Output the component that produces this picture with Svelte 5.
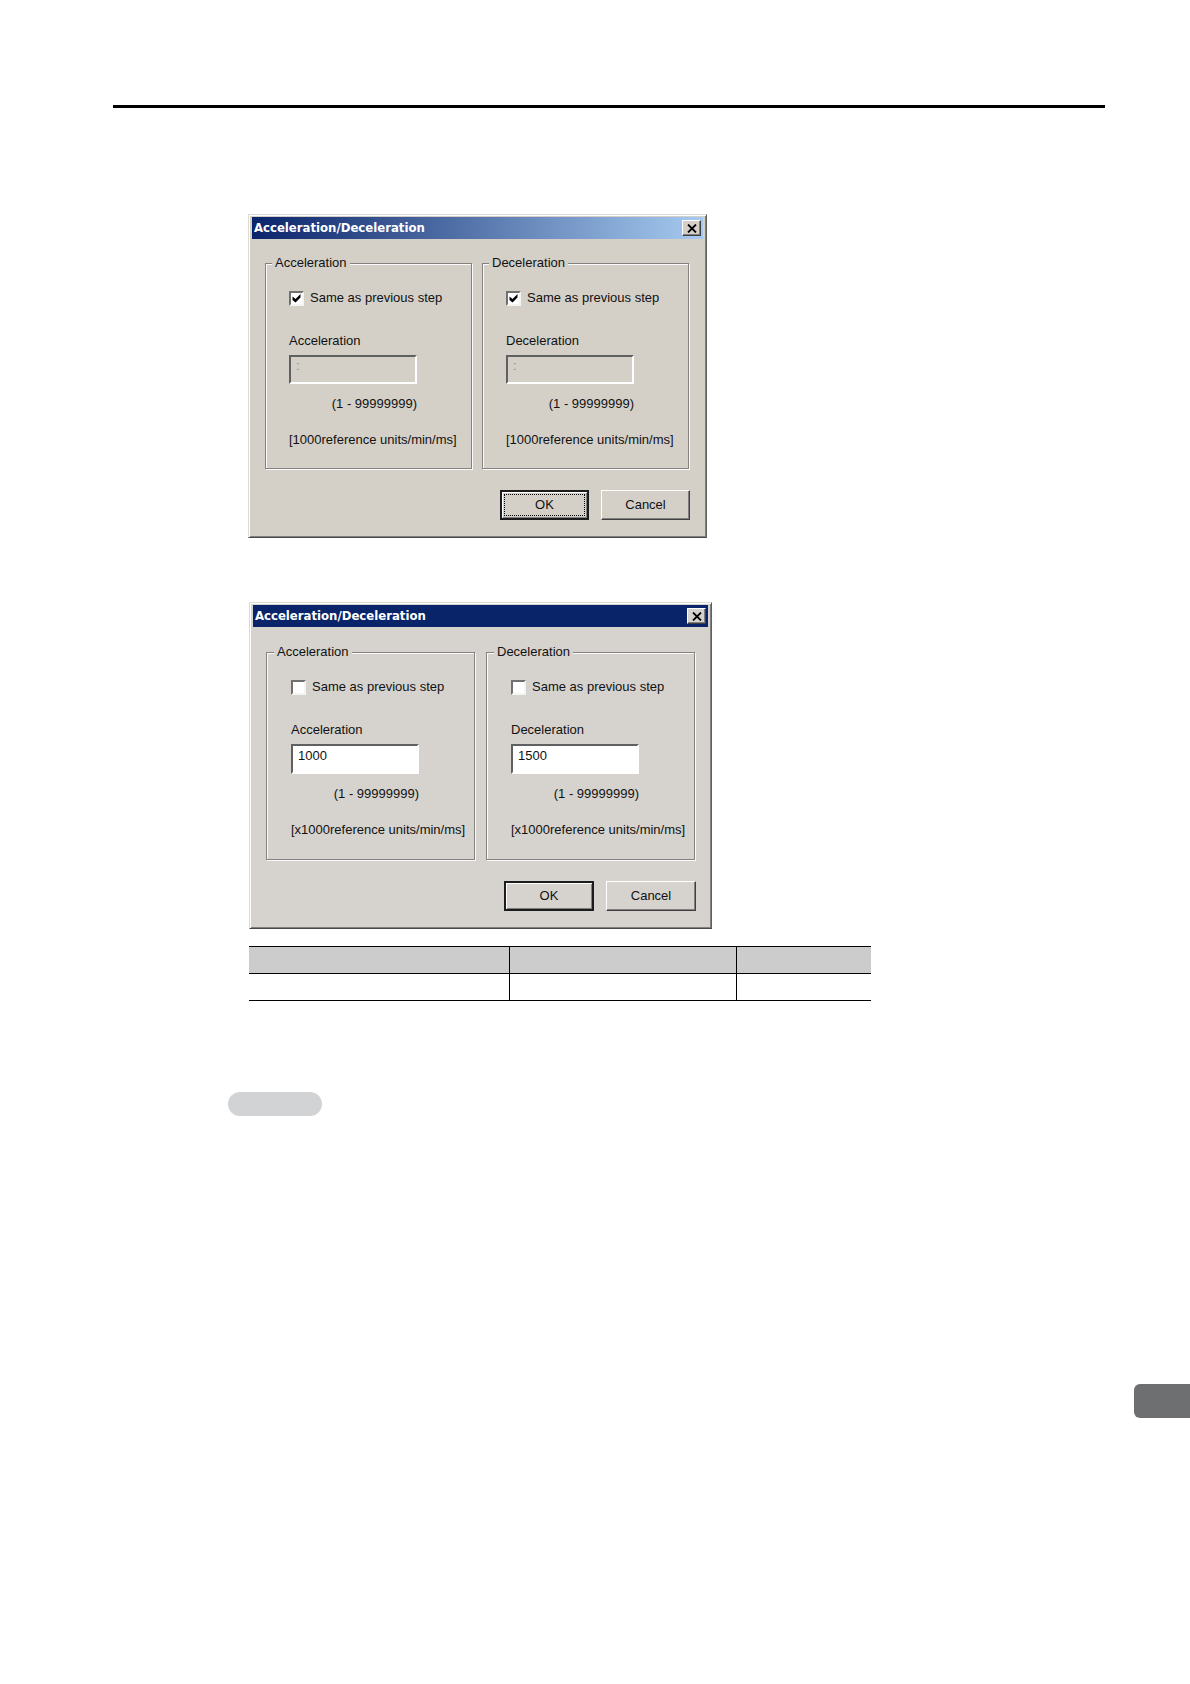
<script>
  let dialogs = $state([
    {
      id: 'same',
      active: 'gradient',
      unit: '[1000reference units/min/ms]',
      groups: [
        { name: 'Acceleration', same: true, value: ':' },
        { name: 'Deceleration', same: true, value: ':' }
      ]
    },
    {
      id: 'custom',
      active: 'solid',
      unit: '[x1000reference units/min/ms]',
      groups: [
        { name: 'Acceleration', same: false, value: '1000' },
        { name: 'Deceleration', same: false, value: '1500' }
      ]
    }
  ]);
</script>

<main>
  <hr />

  {#each dialogs as dialog (dialog.id)}
    <section class="dialog {dialog.active}" aria-labelledby="{dialog.id}-title">
      <header>
        <h2 id="{dialog.id}-title">Acceleration/Deceleration</h2>
        <button class="close" type="button" aria-label="Close">
          <svg viewBox="0 0 10 9" width="10" height="9" aria-hidden="true">
            <path d="M1 0.5 L9 8.5 M9 0.5 L1 8.5" stroke="#000" stroke-width="1.8" fill="none" />
          </svg>
        </button>
      </header>
      <form onsubmit={(e) => e.preventDefault()}>
        <div class="groups">
          {#each dialog.groups as group (group.name)}
            <fieldset>
              <legend>{group.name}</legend>
              <label class="check">
                <input type="checkbox" bind:checked={group.same} />
                <svg viewBox="0 0 15 15" width="15" height="15" aria-hidden="true">
                  <path d="M3.5 5.5 L6.5 8 L11.5 3 V6.5 L6.5 11.5 L3.5 9 Z" fill="#000" />
                </svg>
                <span>Same as previous step</span>
              </label>
              <label class="name" for="{dialog.id}-{group.name}">{group.name}</label>
              <div class="entry">
                <input
                  class="value"
                  id="{dialog.id}-{group.name}"
                  type="text"
                  bind:value={group.value}
                  disabled={group.same}
                />
                <p class="range">(1 - 99999999)</p>
              </div>
              <p class="unit">{dialog.unit}</p>
            </fieldset>
          {/each}
        </div>
        <div class="actions">
          <button class="push default" type="submit"><span>OK</span></button>
          <button class="push" type="button"><span>Cancel</span></button>
        </div>
      </form>
    </section>
  {/each}

  <table>
    <colgroup><col class="wide" /><col class="mid" /><col /></colgroup>
    <thead><tr><th></th><th></th><th></th></tr></thead>
    <tbody><tr><td></td><td></td><td></td></tr></tbody>
  </table>

  <div class="pill"></div>
  <div class="tab"></div>
</main>

<style>
  :global(body) {
    margin: 0;
    background: #fff;
  }
  main {
    box-sizing: border-box;
    display: flex;
    flex-direction: column;
    align-items: flex-start;
    min-height: 100vh;
    padding-top: 105px;
    font: 13px/16px 'Liberation Sans', Arial, sans-serif;
    color: #111;
  }
  hr {
    align-self: stretch;
    height: 3px;
    margin: 0 85px 106px 113px;
    border: 0;
    background: #000;
  }
  .dialog {
    --face: #d4d0c8;
    --top: 16px;
    --field: 29px;
    --foot: 20px;
    --gap: 9px;
    --inset: 23px;
    --right: 14px;
    --button: 89px;
    box-sizing: border-box;
    width: 459px;
    max-width: 100%;
    margin: 0 0 64px 248px;
    border: 1px solid;
    border-color: #dcdad4 #606060 #484848 #dcdad4;
    box-shadow: inset 1px 1px #fff, inset -1px -1px #808080;
    padding: 2px;
    background: var(--face);
  }
  .solid {
    --face: #d6d3ce;
    --top: 17px;
    --field: 30px;
    --foot: 21px;
    --gap: 10px;
    --inset: 24px;
    --right: 13px;
    --button: 90px;
    width: 463px;
    margin: 0 0 17px 249px;
  }
  header {
    display: flex;
    align-items: center;
    justify-content: space-between;
    height: 22px;
    margin: 0 1px;
    padding: 0 2px;
    background: #0a246a;
  }
  .gradient header {
    background: linear-gradient(90deg, #0a246a, #a6caf0);
  }
  h2 {
    margin: 0;
    font: bold 13px/20px 'DejaVu Sans Condensed', 'Noto Sans', sans-serif;
    color: #fff;
    white-space: nowrap;
  }
  button {
    font: inherit;
    color: inherit;
    background: var(--face);
    border: 1px solid;
    border-color: #fff #404040 #404040 #fff;
    box-shadow: inset -1px -1px #808080;
  }
  .close {
    display: flex;
    align-items: center;
    justify-content: center;
    width: 19px;
    height: 16px;
    padding: 0;
  }
  form {
    padding: var(--top) var(--right) 15px 14px;
  }
  .groups {
    display: grid;
    grid-template-columns: 1fr 1fr;
    gap: var(--gap);
  }
  fieldset {
    display: flex;
    flex-direction: column;
    align-items: flex-start;
    min-width: 0;
    margin: 0 1px 1px 0;
    padding: 19px 0 var(--foot) var(--inset);
    border: 1px solid #848280;
    box-shadow: 1px 1px #fafafa, inset 1px 1px #fafafa;
  }
  legend {
    margin-left: -17px;
    padding: 0 3px;
    background: var(--face);
  }
  .check {
    display: flex;
    align-items: center;
    gap: 6px;
    height: 16px;
    margin-bottom: 27px;
    white-space: nowrap;
  }
  .check input {
    appearance: none;
    width: 15px;
    height: 15px;
    margin: 0;
    border: 2px solid;
    border-color: #707070 #f4f4f2 #f4f4f2 #707070;
    background: #fff;
  }
  .check svg {
    margin-left: -21px;
    visibility: hidden;
    pointer-events: none;
  }
  .check input:checked + svg {
    visibility: visible;
  }
  .name {
    margin-bottom: 6px;
  }
  .entry {
    width: 128px;
    margin-bottom: 20px;
  }
  .value {
    display: block;
    box-sizing: border-box;
    width: 100%;
    height: var(--field);
    padding: 0 5px 8px;
    border: 2px solid;
    border-color: #606060 #fff #fff #606060;
    font: inherit;
    color: #111;
    background: #fff;
  }
  .value:disabled {
    color: #8c8a86;
    background: var(--face);
  }
  .range {
    margin: 12px 0 0;
    text-align: right;
  }
  .unit {
    margin: 0;
    white-space: nowrap;
  }
  .actions {
    display: flex;
    justify-content: flex-end;
    gap: 12px;
    margin-top: 20px;
  }
  .push {
    width: var(--button);
    height: 30px;
    padding: 3px;
  }
  .push span {
    display: flex;
    align-items: center;
    justify-content: center;
    height: 20px;
  }
  .default {
    border: 2px solid #1c1c1c;
    box-shadow: inset 1px 1px #fff, inset -1px -1px #808080;
    padding: 2px;
  }
  .gradient .default span {
    border: 1px dotted #000;
  }
  table {
    width: 622px;
    max-width: 100%;
    margin-left: 249px;
    border-collapse: collapse;
    table-layout: fixed;
  }
  .wide {
    width: 260px;
  }
  .mid {
    width: 227px;
  }
  th,
  td {
    height: 26px;
    padding: 0;
    border: 1px solid #000;
  }
  th {
    background: #ccc;
  }
  th:first-child,
  td:first-child {
    border-left: 0;
  }
  th:last-child,
  td:last-child {
    border-right: 0;
  }
  .pill {
    width: 94px;
    height: 24px;
    margin: 91px 0 268px 228px;
    border-radius: 12px;
    background: #d1d3d4;
  }
  .tab {
    align-self: flex-end;
    width: 56px;
    height: 34px;
    border-radius: 6px 0 0 6px;
    background: #6d6f71;
  }
</style>
